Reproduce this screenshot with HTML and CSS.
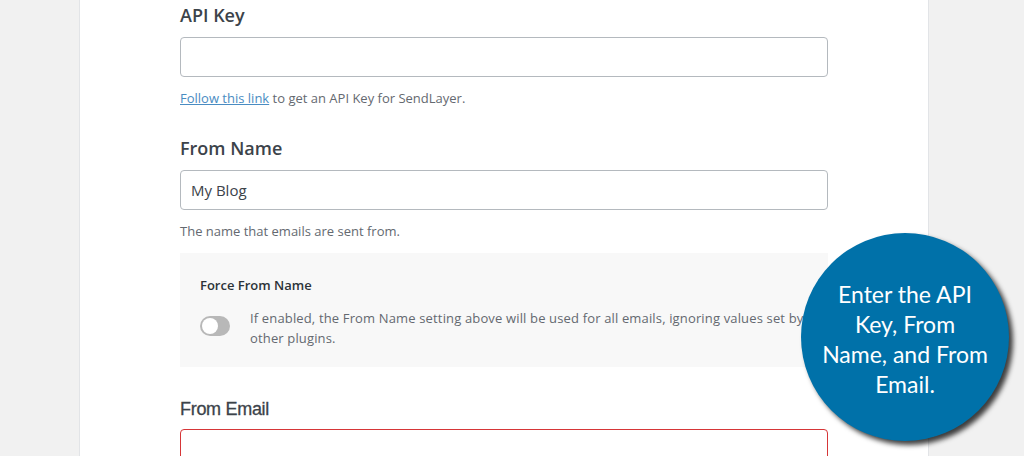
FILE: index.html
```html
<!DOCTYPE html>
<html lang="en">

<head>
  <meta charset="UTF-8">
  <meta name="viewport" content="width=device-width, initial-scale=1.0">
  <title>SendLayer Settings</title>
  <link rel="stylesheet" href="styles.css">
</head>

<body>
  <div class="page">
    <div class="panel">
      <div class="field">
        <div class="label">API Key</div>
        <input class="input" type="text">
        <p class="help"><a href="#">Follow this link</a> to get an API Key for SendLayer.</p>
      </div>

      <div class="field">
        <div class="label">From Name</div>
        <input class="input" type="text" value="My Blog">
        <p class="help">The name that emails are sent from.</p>
      </div>

      <div class="option-box">
        <div class="option-title">Force From Name</div>
        <div class="option-row">
          <span class="toggle"><span class="knob"></span></span>
          <p class="option-text">If enabled, the From Name setting above will be used for all emails, ignoring values set by other plugins.</p>
        </div>
      </div>

      <div class="field">
        <div class="label label-email">From Email</div>
        <input class="input input-error" type="text">
      </div>
    </div>
  </div>

  <div class="callout">Enter the API<br>Key, From<br>Name, and From<br>Email.</div>
</body>

</html>
```

FILE: styles.css
```css
body {
  margin: 0;
  height: 456px;
  overflow: hidden;
  background: #f1f1f1;
  font-family: "Open Sans", "Noto Sans", sans-serif;
  color: #3c434a;
}

.page {
  padding-left: 79px;
}

.panel {
  width: 648px;
  height: 456px;
  background: #fff;
  border-left: 1px solid #e2e4e7;
  border-right: 1px solid #e2e4e7;
  padding: 3px 100px 0 100px;
}

.field {
  margin-bottom: 29px;
}

.label {
  font-size: 18px;
  font-weight: 600;
  line-height: 24px;
  margin-bottom: 10px;
  color: #3c434a;
}

.label-email {
  font-family: "Liberation Sans", sans-serif;
  font-weight: 400;
  letter-spacing: -0.3px;
  -webkit-text-stroke: 0.3px #3c434a;
  margin-bottom: 8px;
}

.input {
  display: block;
  width: 648px;
  height: 40px;
  box-sizing: border-box;
  border: 1px solid #b4b9be;
  border-radius: 4px;
  padding: 0 10px;
  font-family: inherit;
  font-size: 15px;
  color: #3c434a;
  background: #fff;
}

.input-error {
  border-color: #d63638;
}

.help {
  margin: 12px 0 0;
  font-size: 13px;
  line-height: 18px;
  color: #646970;
}

.help a {
  color: #4a8cc2;
}

.option-box {
  background: #f8f8f8;
  padding: 23px 20px 20px;
  margin: -16px 0 30px;
  height: 71px;
}

.option-title {
  font-size: 13px;
  font-weight: 600;
  line-height: 18px;
  color: #2c3338;
  margin-bottom: 14px;
}

.option-row {
  display: flex;
  gap: 20px;
  align-items: flex-start;
}

.toggle {
  flex: none;
  position: relative;
  width: 30px;
  height: 20px;
  margin-top: 8px;
  border-radius: 10px;
  background: #b8b8b8;
}

.knob {
  position: absolute;
  left: 2px;
  top: 2px;
  width: 16px;
  height: 16px;
  border-radius: 50%;
  background: #fff;
}

.option-text {
  margin: 0;
  font-size: 13px;
  line-height: 20px;
  letter-spacing: 0.15px;
  color: #646970;
}

.callout {
  position: absolute;
  left: 801px;
  top: 233px;
  width: 208px;
  height: 208px;
  box-sizing: border-box;
  padding-top: 4px;
  border-radius: 50%;
  background: #0071a9;
  box-shadow: 4px 4px 5px rgba(0, 0, 0, 0.75);
  color: #fff;
  font-family: "Lato", sans-serif;
  font-size: 23px;
  line-height: 30px;
  text-align: center;
  display: flex;
  align-items: center;
  justify-content: center;
}
```
